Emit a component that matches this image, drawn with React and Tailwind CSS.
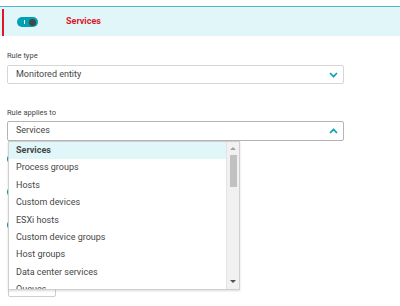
import React from "react";

const items = [
  "Services",
  "Process groups",
  "Hosts",
  "Custom devices",
  "ESXi hosts",
  "Custom device groups",
  "Host groups",
  "Data center services",
  "Queues",
];

function Chevron({ up }) {
  return (
    <svg width="9" height="6" viewBox="0 0 9 6" className="text-[#00a1b2]">
      {up ? (
        <polyline points="1,5 4.5,1.5 8,5" fill="none" stroke="currentColor" strokeWidth="1.6" />
      ) : (
        <polyline points="1,1 4.5,4.5 8,1" fill="none" stroke="currentColor" strokeWidth="1.6" />
      )}
    </svg>
  );
}

export default function App() {
  return (
    <div
      className="relative w-[400px] h-[306px] overflow-hidden bg-white text-[#454646]"
      style={{ fontFamily: "Roboto, 'Liberation Sans', sans-serif" }}
    >
      {/* entête de la règle */}
      <div className="pt-[6px]">
        <div className="flex h-[30px] border-t border-[#4ab9cf] bg-[#e1f6f9]">
          <div className="ml-[2px] mt-[2px] w-[2px] bg-[#dc172a]" />
          <div className="ml-[13px] mt-[10px] relative w-[21px] h-[10px] rounded-full bg-[#00a1b2]">
            <span className="absolute left-[7px] top-[3px] w-[1px] h-[4px] bg-white" />
            <span className="absolute left-[12px] top-[1.5px] w-[7px] h-[7px] rounded-full bg-[#454646]" />
          </div>
          <span className="ml-[28px] mt-[8px] text-[9px] font-bold text-[#dc172a]">Services</span>
        </div>
      </div>

      {/* formulaire */}
      <div className="px-[7px] w-[351px]">
        <div className="mt-[15px] text-[7.5px] leading-[10px]">Rule type</div>
        <div className="mt-[4px] h-[19px] flex items-center justify-between border border-[#d6d6d6] rounded-[2px] pl-[8px] pr-[5px]">
          <span className="text-[9px]">Monitored entity</span>
          <Chevron />
        </div>

        <div className="mt-[24px] text-[7.5px] leading-[10px]">Rule applies to</div>
        <div className="mt-[3px] h-[20px] flex items-center justify-between border border-[#b4b4b4] rounded-[2px] pl-[8px] pr-[5px]">
          <span className="text-[9px]">Services</span>
          <Chevron up />
        </div>

        {/* contenu sous la liste */}
        <div className="mt-[14px] flex flex-col gap-[25px]">
          <span className="w-[4px] h-[8px] rounded-l-full bg-[#00a1b2]" />
          <span className="w-[4px] h-[8px] rounded-l-full bg-[#00a1b2]" />
          <span className="w-[4px] h-[8px] rounded-l-full bg-[#00a1b2]" />
        </div>
        <div className="mt-[54px] ml-[1px] w-[48px] h-[14px] border border-[#cfcfcf] rounded-[2px]" />
      </div>

      {/* liste déroulante ouverte */}
      <div className="absolute left-[8px] top-[141px] w-[232px] h-[149px] flex bg-white border border-[#cfcfcf] shadow-[0_1px_2px_rgba(0,0,0,0.15)] overflow-hidden">
        <ul className="flex-1">
          {items.map((name, i) => (
            <li
              key={name}
              className={
                "h-[17.4px] flex items-center pl-[7px] text-[9px] " +
                (i === 0 ? "bg-[#e1f6f9] font-bold" : "")
              }
            >
              {name}
            </li>
          ))}
        </ul>
        <div className="w-[13px] flex flex-col items-center bg-[#f1f1f1] border-l border-[#e4e4e4]">
          <span className="mt-[5px] w-0 h-0 border-l-[3px] border-r-[3px] border-b-[3px] border-l-transparent border-r-transparent border-b-[#a3a3a3]" />
          <span className="mt-[5px] w-[7px] h-[32px] bg-[#c1c1c1]" />
          <span className="mt-auto mb-[6px] w-0 h-0 border-l-[3px] border-r-[3px] border-t-[3px] border-l-transparent border-r-transparent border-t-[#505050]" />
        </div>
      </div>
    </div>
  );
}
